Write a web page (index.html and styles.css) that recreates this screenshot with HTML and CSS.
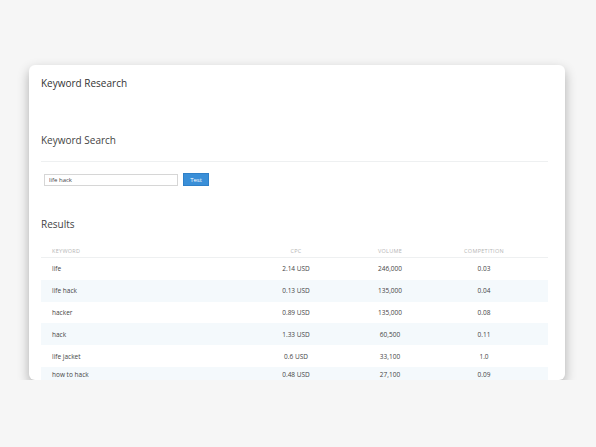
FILE: index.html
```html
<!DOCTYPE html>
<html lang="en">
<head>
    <meta charset="UTF-8">
    <meta name="viewport" content="width=device-width, initial-scale=1.0">
    <title>Keyword Research</title>
    <link rel="stylesheet" href="styles.css">
</head>
<body>
    <div class="card">
        <h1 class="title">Keyword Research</h1>

        <h2 class="section">Keyword Search</h2>
        <div class="search">
            <input type="text" class="search-input" value="life hack">
            <button class="btn">Test</button>
        </div>

        <h2 class="section results-title">Results</h2>
        <table class="results">
            <colgroup>
                <col class="c-keyword">
                <col class="c-num">
                <col class="c-num">
                <col class="c-num">
                <col class="c-pad">
            </colgroup>
            <thead>
                <tr>
                    <th class="kw">Keyword</th>
                    <th>CPC</th>
                    <th>Volume</th>
                    <th>Competition</th>
                    <th></th>
                </tr>
            </thead>
            <tbody>
                <tr><td class="kw">life</td><td>2.14 USD</td><td>246,000</td><td>0.03</td><td></td></tr>
                <tr><td class="kw">life hack</td><td>0.13 USD</td><td>135,000</td><td>0.04</td><td></td></tr>
                <tr><td class="kw">hacker</td><td>0.89 USD</td><td>135,000</td><td>0.08</td><td></td></tr>
                <tr><td class="kw">hack</td><td>1.33 USD</td><td>60,500</td><td>0.11</td><td></td></tr>
                <tr><td class="kw">life jacket</td><td>0.6 USD</td><td>33,100</td><td>1.0</td><td></td></tr>
                <tr><td class="kw">how to hack</td><td>0.48 USD</td><td>27,100</td><td>0.09</td><td></td></tr>
            </tbody>
        </table>
    </div>
</body>
</html>
```

FILE: styles.css
```css
body {
    margin: 0;
    background-color: #f6f6f6;
    font-family: "Open Sans", "Liberation Sans", sans-serif;
    color: #333;
}

.card {
    margin: 65px 0 0 29px;
    width: 512px;
    height: 304px;
    padding: 11px 12px 0 12px;
    background-color: #fff;
    border-radius: 6px;
    box-shadow: 0 5px 12px rgba(0, 0, 0, 0.3);
    overflow: hidden;
}

.title {
    margin: 0;
    font-size: 10px;
    font-weight: 400;
    line-height: 14px;
}

.section {
    width: 507px;
    margin: 43px 0 0 0;
    font-size: 10px;
    font-weight: 400;
    line-height: 14px;
    color: #444;
    padding-bottom: 14px;
    border-bottom: 1px solid #eef0f1;
}

.results-title {
    margin-top: 31px;
    padding-bottom: 0;
    border-bottom: none;
}

.search {
    display: flex;
    align-items: center;
    gap: 5px;
    margin: 11px 0 0 3px;
}

.search-input {
    box-sizing: border-box;
    width: 134px;
    height: 12px;
    padding: 0 4px;
    border: 1px solid #d6d6d6;
    font-family: inherit;
    font-size: 6px;
    color: #444;
    outline: none;
}

.btn {
    width: 26px;
    height: 13px;
    padding: 0;
    border: 1px solid #2f80c8;
    background-color: #3a8fd8;
    color: #fff;
    font-family: inherit;
    font-size: 6px;
}

.results {
    width: 507px;
    margin-top: 13px;
    border-collapse: collapse;
    table-layout: fixed;
}

.c-keyword { width: 208px; }
.c-num { width: 94px; }
.c-pad { width: 17px; }

.results th {
    height: 13px;
    padding: 0;
    font-size: 5.5px;
    font-weight: 400;
    letter-spacing: 0.3px;
    text-transform: uppercase;
    color: #b5b5b5;
    text-align: center;
    border-bottom: 1px solid #eef0f1;
}

.results td {
    height: 21.8px;
    padding: 0;
    font-size: 6.5px;
    color: #444;
    text-align: center;
}

.results tbody tr:last-child td {
    vertical-align: top;
    padding-top: 3px;
    line-height: 9px;
}

.results .kw {
    text-align: left;
    padding-left: 11px;
}

.results tbody tr:nth-child(even) {
    background-color: #f4f9fc;
}
```
